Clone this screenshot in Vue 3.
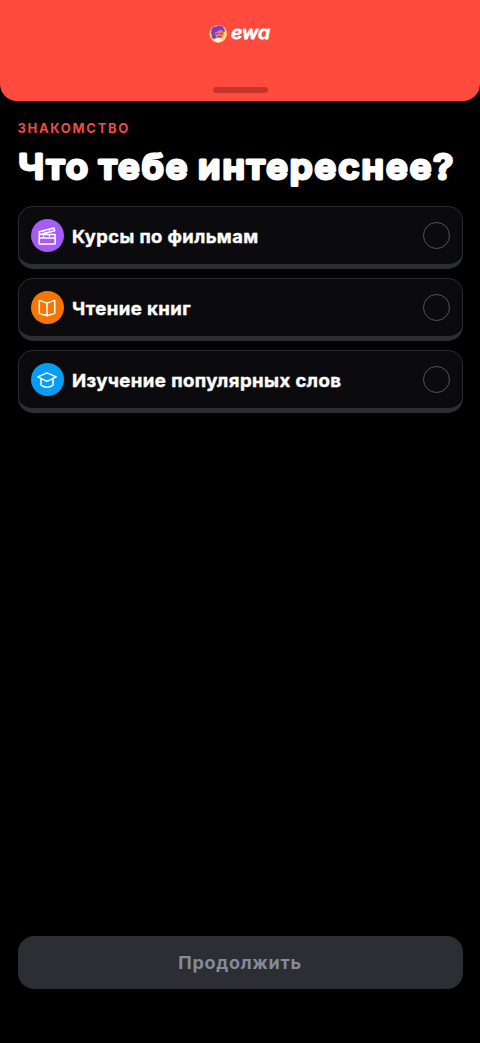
<script setup>
const options = [
  { id: 'films', label: 'Курсы по фильмам', width: 186.5 },
  { id: 'books', label: 'Чтение книг', width: 119.2 },
  { id: 'words', label: 'Изучение популярных слов', width: 269.5 },
]
</script>

<template>
  <main class="screen">
    <header class="header">
      <svg class="logo" width="64" height="24" viewBox="0 0 64 24">
        <circle cx="10.2" cy="11.7" r="8.8" fill="#ffd568" />
        <path d="M3.3 9.5C2.8 6.5 5.4 3.7 8.5 4.6c2.3-2.2 6.6-.9 7.3 1.8 1.7 1.4 1.2 3.5-.2 4.2l-8.2 6.2c-3.1.5-4.6-2-3.3-3.9-1.1-.8-1.3-2.2-.8-3.4Z" fill="#853ac6" />
        <path d="M7.2 10.1c2.2.3 3.5-2 5.5-2 2.4 0 3.5 2.3 2.9 5-.5 2.3-2.2 3.9-4.1 3.9-2.6 0-4.2-2.1-4.3-6.9Z" fill="#eb8072" />
        <path d="M8.6 11.7h1.8M12.6 11.4h1.5M10.3 14.4q1.5.8 2.7-.3" fill="none" stroke="#5e2970" stroke-width=".9" stroke-linecap="round" />
        <path d="M5.6 18.1c1.6-2.6 7.3-2.7 9.3-.3-2 3.3-6.8 3.5-9.3.3Z" fill="#fff0df" />
        <text class="wordmark" x="23" y="16.8" textLength="39" lengthAdjust="spacingAndGlyphs">ewa</text>
      </svg>
      <div class="progress"></div>
    </header>

    <section class="content">
      <p class="eyebrow">ЗНАКОМСТВО</p>
      <h1 class="title">
        <svg width="445" height="48" viewBox="0 0 445 48">
          <text x=".2" y="32.5" textLength="437" lengthAdjust="spacingAndGlyphs">Что тебе интереснее?</text>
        </svg>
      </h1>
      <div class="options">
        <button v-for="option in options" :key="option.id" class="option">
          <span class="badge" :class="option.id">
            <svg v-if="option.id === 'films'" width="20" height="20" viewBox="0 0 20 20">
              <path d="M2.2 8.4h15.9v9.7H2.2zM2.2 12h15.9M2 5.7l15-3.6.7 2.6-15 3.7z" />
              <path class="thin" d="m6.3 4.8 2.3 2M11.3 3.6l2.3 2M6.7 8.7v3M12.3 8.7v3" />
            </svg>
            <svg v-else-if="option.id === 'books'" width="20" height="20" viewBox="0 0 20 20">
              <path d="M10 5.1 2.3 2.4v13L10 17.8l7.7-2.4v-13ZM10 5.1v12.7" />
            </svg>
            <svg v-else width="20" height="20" viewBox="0 0 20 20">
              <path d="m.8 6.9 9.2-4 9.2 4-9.2 4.5ZM4 8.7v6.5q6 4.3 12 0V8.7" />
            </svg>
          </span>
          <svg class="label" height="30" :width="option.width + 2">
            <text x="1" y="21.5" :textLength="option.width" lengthAdjust="spacingAndGlyphs">{{ option.label }}</text>
          </svg>
          <span class="radio"></span>
        </button>
      </div>
    </section>

    <footer class="footer">
      <button class="continue">Продолжить</button>
    </footer>
  </main>
</template>

<style>
body { background: #000; }
</style>

<style scoped>
* { box-sizing: border-box; }
.screen {
  width: 480px;
  height: 1043px;
  display: flex;
  flex-direction: column;
  background: #000;
  color: #fff;
  font-family: Inter, "Noto Sans", sans-serif;
  overflow: hidden;
}
.header {
  height: 101px;
  flex: none;
  display: flex;
  flex-direction: column;
  align-items: center;
  justify-content: space-between;
  padding: 22px 0 8px;
  background: #ff4b3d;
  border-radius: 0 0 17px 17px;
}
.logo { display: block; }
.wordmark {
  font-family: Inter, sans-serif;
  font-size: 17px;
  font-style: italic;
  font-weight: 500;
  fill: #fff;
  stroke: #fff;
  stroke-width: .8px;
  stroke-linejoin: round;
}
.progress { width: 55px; height: 6px; border-radius: 3px; background: #c4342d; }
.content { flex: 1; padding: 18.5px 17.5px 0; }
.eyebrow {
  margin: 0;
  height: 17px;
  line-height: 17px;
  font-size: 13px;
  font-weight: 700;
  letter-spacing: 1.68px;
  color: #ef4b43;
}
.title { margin: 9.5px 0 0; height: 60px; }
.title svg { display: block; overflow: visible; }
.title text {
  font-size: 34px;
  font-weight: 600;
  letter-spacing: 1.9px;
  word-spacing: -2.5px;
  fill: #fff;
  stroke: #fff;
  stroke-width: 2.9px;
  stroke-linejoin: round;
}
.options { display: flex; flex-direction: column; gap: 9px; }
.option {
  width: 445px;
  height: 63px;
  display: flex;
  align-items: center;
  padding: 0 11.5px 0 12px;
  border: 1.5px solid #292b2e;
  border-bottom: 5px solid #2b2e32;
  border-radius: 15px;
  background: #0b0b0d;
  font-family: inherit;
}
.badge {
  width: 33px;
  height: 33px;
  flex: none;
  display: flex;
  align-items: center;
  justify-content: center;
  border-radius: 50%;
}
.films { background: #a65cf8; }
.books { background: #f57505; }
.words { background: #079cf5; }
.badge path {
  fill: none;
  stroke: #fff;
  stroke-width: 1.5;
  stroke-linecap: round;
  stroke-linejoin: round;
}
.badge .thin { stroke-width: 1; }
.label { margin-left: 7px; overflow: visible; }
.label text {
  font-size: 18px;
  font-weight: 700;
  letter-spacing: .4px;
  fill: #fff;
  stroke: #fff;
  stroke-width: .4px;
  stroke-linejoin: round;
}
.radio {
  width: 27px;
  height: 27px;
  margin-left: auto;
  border: 1.2px solid #55575a;
  border-radius: 50%;
}
.footer { flex: none; padding: 0 17.5px 54.5px; }
.continue {
  display: block;
  width: 100%;
  height: 52.5px;
  padding: 0;
  border: 0;
  border-radius: 16px;
  background: #2b2e33;
  color: #858b9a;
  font: 700 18px Inter, "Noto Sans", sans-serif;
  letter-spacing: .7px;
}
</style>
